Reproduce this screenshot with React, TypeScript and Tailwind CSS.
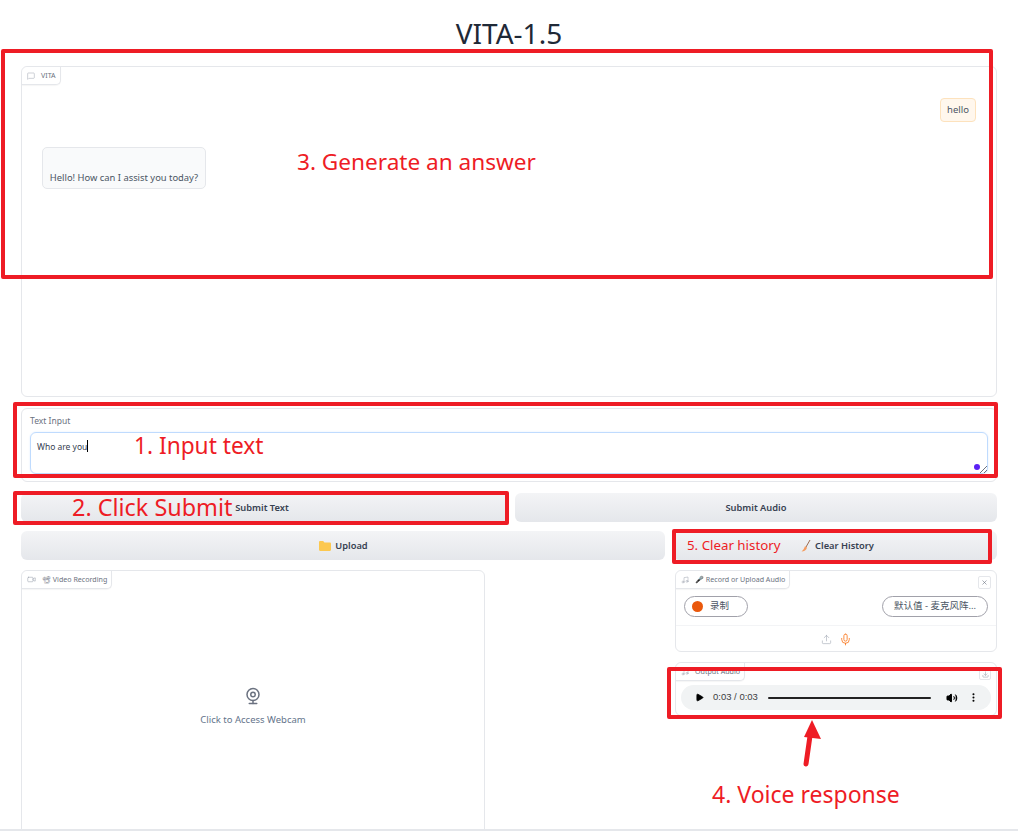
import React from 'react';
import { Video, Music, MessageSquare, Upload, Mic, X, Download, Play, Volume2, MoreVertical, Webcam } from 'lucide-react';

const BlockLabel = ({ icon, children }: { icon: React.ReactNode; children: React.ReactNode }) => (
  <div className="absolute left-0 top-0 flex h-[18px] items-center gap-[6px] rounded-br-[5px] rounded-tl-[6px] border-b border-r border-[#e5e7eb] bg-white pl-[5px] pr-[4px] text-[7.1px] text-[#6b7280] shadow-[0_1px_1px_rgba(0,0,0,0.04)]">
    {icon}
    {children}
  </div>
);

const GrayButton = ({ className, children }: { className: string; children: React.ReactNode }) => (
  <button className={`flex h-[29px] items-center justify-center gap-[4px] rounded-[6px] bg-gradient-to-b from-[#f3f4f6] to-[#e5e7eb] pt-[1px] text-[9.3px] font-semibold text-[#374151] ${className}`}>
    {children}
  </button>
);

const RedBox = ({ className }: { className: string }) => (
  <div className={`pointer-events-none absolute rounded-[2px] border-[4px] border-[#ee1c25] ${className}`} />
);

const Note = ({ className, children }: { className: string; children: React.ReactNode }) => (
  <div className={`absolute whitespace-nowrap font-['Noto_Sans',sans-serif] leading-none text-[#ee1c25] ${className}`}>{children}</div>
);

const App: React.FC = () => {
  return (
    <div className="relative h-[833px] w-[1018px] overflow-hidden bg-white font-['Noto_Sans','Noto_Sans_CJK_SC',sans-serif]">
      <div className="flex flex-col px-[21px]">
        <h1 className="flex h-[66px] items-center justify-center text-[28px] leading-none text-[#1f2937]">VITA-1.5</h1>

        {/* chatbot */}
        <section className="relative h-[331px] rounded-[6px] border border-[#e5e7eb]">
          <BlockLabel icon={<MessageSquare size={8} strokeWidth={1.5} className="text-[#9ca3af]" />}>VITA</BlockLabel>
          <div className="flex justify-end pr-[20px] pt-[31px]">
            <div className="flex h-[24px] w-[36px] items-center justify-center rounded-[4px] border border-[#fde2bd] bg-[#fff7ed] text-[9.5px] text-[#4b5563]">hello</div>
          </div>
          <div className="ml-[20px] mt-[25px] flex h-[42px] w-[164px] items-end justify-center rounded-[5px] border border-[#e5e7eb] bg-[#f9fafb] pb-[3px] text-[9.4px] text-[#4b5563]">
            Hello! How can I assist you today?
          </div>
        </section>

        {/* text input */}
        <section className="mt-[11px] h-[74px] rounded-[6px] border border-[#e5e7eb] px-[8px] pt-[6px]">
          <div className="text-[8.5px] leading-[12px] text-[#6b7280]">Text Input</div>
          <div className="relative mt-[5px] h-[42px] rounded-[6px] border border-[#bfdbfe] px-[6px] pt-[5px] text-[8.5px] leading-[12px] text-[#374151] shadow-[0_0_2px_#dbeafe]">
            Who are you<span className="inline-block h-[12px] w-px translate-y-[2px] bg-black" />
            <span className="absolute bottom-[3px] right-[7px] size-[6px] rounded-full bg-[#5b21f5]" />
            <svg viewBox="0 0 8 8" className="absolute bottom-0 right-0 size-[8px]" fill="none" stroke="#6b7280">
              <path d="M1 8 8 1M5 8l3-3" />
            </svg>
          </div>
        </section>

        <div className="mt-[11px] flex gap-[8px]">
          <GrayButton className="w-[486px] pr-[4px]">Submit Text</GrayButton>
          <GrayButton className="w-[482px]">Submit Audio</GrayButton>
        </div>

        <div className="mt-[9px] flex gap-[8px]">
          <GrayButton className="w-[644px] pl-[1px]">
            <svg viewBox="0 0 12 10" className="h-[10px] w-[12px]">
              <path d="M0 1.2C0 .5.5 0 1.2 0h3l1.2 1.5h5.4c.7 0 1.2.5 1.2 1.2v6.1c0 .7-.5 1.2-1.2 1.2H1.2C.5 10 0 9.5 0 8.8z" fill="#fcc850" />
            </svg>
            Upload
          </GrayButton>
          <GrayButton className="w-[324px] pl-[5px]">
            <svg viewBox="0 0 10 12" className="h-[12px] w-[10px]">
              <path d="M9 0 5 7" stroke="#9a6a4f" strokeWidth="1" />
              <path d="M4 6.2 6 7.5C5.500 10 3 11.500.5 11.500 2 10.500 3 8.500 4 6.200z" fill="#f59a5d" />
            </svg>
            Clear History
          </GrayButton>
        </div>

        <div className="mt-[10px] flex items-start">
          {/* webcam */}
          <section className="relative h-[300px] w-[464px] rounded-[6px] border border-[#e5e7eb]">
            <BlockLabel icon={<Video size={9} strokeWidth={1.5} className="text-[#9ca3af]" />}>
              <span className="text-[#6b7280]">📽 Video Recording</span>
            </BlockLabel>
            <div className="flex flex-col items-center pt-[116px] text-[9.5px] text-[#64748b]">
              <Webcam size={18} strokeWidth={2} className="text-[#6b7280]" />
              <div className="mt-[8px]">Click to Access Webcam</div>
            </div>
          </section>

          <div className="ml-[190px] flex w-[322px] flex-col">
            {/* audio input */}
            <section className="relative h-[82px] rounded-[6px] border border-[#e5e7eb]">
              <BlockLabel icon={<Music size={8} strokeWidth={1.5} className="text-[#9ca3af]" />}>
                <span>🎤 Record or Upload Audio</span>
              </BlockLabel>
              <button className="absolute right-[5px] top-[5px] flex size-[13px] items-center justify-center rounded-[2px] border border-[#e5e7eb] text-[#6b7280]">
                <X size={7} />
              </button>
              <div className="flex h-[55px] items-center justify-between border-b border-[#f3f4f6] px-[8px] pt-[16px]">
                <div className="flex h-[21px] w-[64px] items-center gap-[7px] rounded-full border border-[#a1a1aa] pl-[7px] text-[9.5px] text-[#4b5563]">
                  <span className="size-[11px] rounded-full bg-[#ea580c]" />
                  录制
                </div>
                <div className="flex h-[21px] w-[106px] items-center justify-center rounded-full border border-[#a1a1aa] text-[9.5px] text-[#4b5563]">默认值 - 麦克风阵…</div>
              </div>
              <div className="flex h-[26px] items-center justify-center gap-[7px] pt-[1px]">
                <Upload size={11} strokeWidth={1.25} className="text-[#9ca3af]" />
                <Mic size={13} strokeWidth={1.5} className="text-[#f97316]" />
              </div>
            </section>

            {/* audio output */}
            <section className="relative mt-[10px] h-[54px] rounded-[6px] border border-[#e5e7eb] px-[5px]">
              <BlockLabel icon={<Music size={8} strokeWidth={1.5} className="text-[#9ca3af]" />}>
                <span>Output Audio</span>
              </BlockLabel>
              <button className="absolute right-[5px] top-[5px] flex size-[12px] items-center justify-center rounded-[2px] border border-[#e5e7eb] text-[#9ca3af]">
                <Download size={7} />
              </button>
              <div className="mt-[22px] flex h-[25px] items-center rounded-full bg-[#f1f3f4] pl-[14px] pr-[12px] font-['Liberation_Sans',sans-serif] text-[9.5px] text-[#3c4043]">
                <Play size={9} fill="#000" className="text-black" />
                <span className="ml-[9px] w-[55px] whitespace-nowrap">0:03 / 0:03</span>
                <div className="h-[2px] w-[164px] rounded-full bg-[#222]" />
                <Volume2 size={12} fill="#000" className="ml-[15px] text-black" />
                <MoreVertical size={11} strokeWidth={2.5} className="ml-[10px] text-black" />
              </div>
            </section>
          </div>
        </div>
      </div>

      {/* bottom edge of the captured page */}
      <div className="absolute inset-x-0 bottom-0 h-[4px] border-t-2 border-[#e5e7eb] bg-white" />

      {/* annotations drawn over the page */}
      <RedBox className="left-[1px] top-[49px] h-[230px] w-[992px]" />
      <RedBox className="left-[13px] top-[402px] h-[76px] w-[985px]" />
      <RedBox className="left-[13px] top-[491px] h-[34px] w-[496px]" />
      <RedBox className="left-[672px] top-[529px] h-[35px] w-[320px]" />
      <RedBox className="left-[667px] top-[667px] h-[52px] w-[335px]" />

      <Note className="left-[297px] top-[151px] text-[22.6px]">3. Generate an answer</Note>
      <Note className="left-[134px] top-[435px] text-[22.7px]">1. Input text</Note>
      <Note className="left-[72px] top-[496px] text-[23.4px]">2. Click Submit</Note>
      <Note className="left-[687px] top-[539px] text-[13.3px]">5. Clear history</Note>
      <Note className="left-[712px] top-[783px] text-[23px]">4. Voice response</Note>

      <svg viewBox="0 0 30 50" className="absolute left-[797px] top-[718px] h-[50px] w-[30px]">
        <path d="M9 46 13 18" stroke="#ee1c25" strokeWidth="5" strokeLinecap="round" />
        <path d="M15 2 24 21 7 19z" fill="#ee1c25" />
      </svg>
    </div>
  );
};

export default App;
